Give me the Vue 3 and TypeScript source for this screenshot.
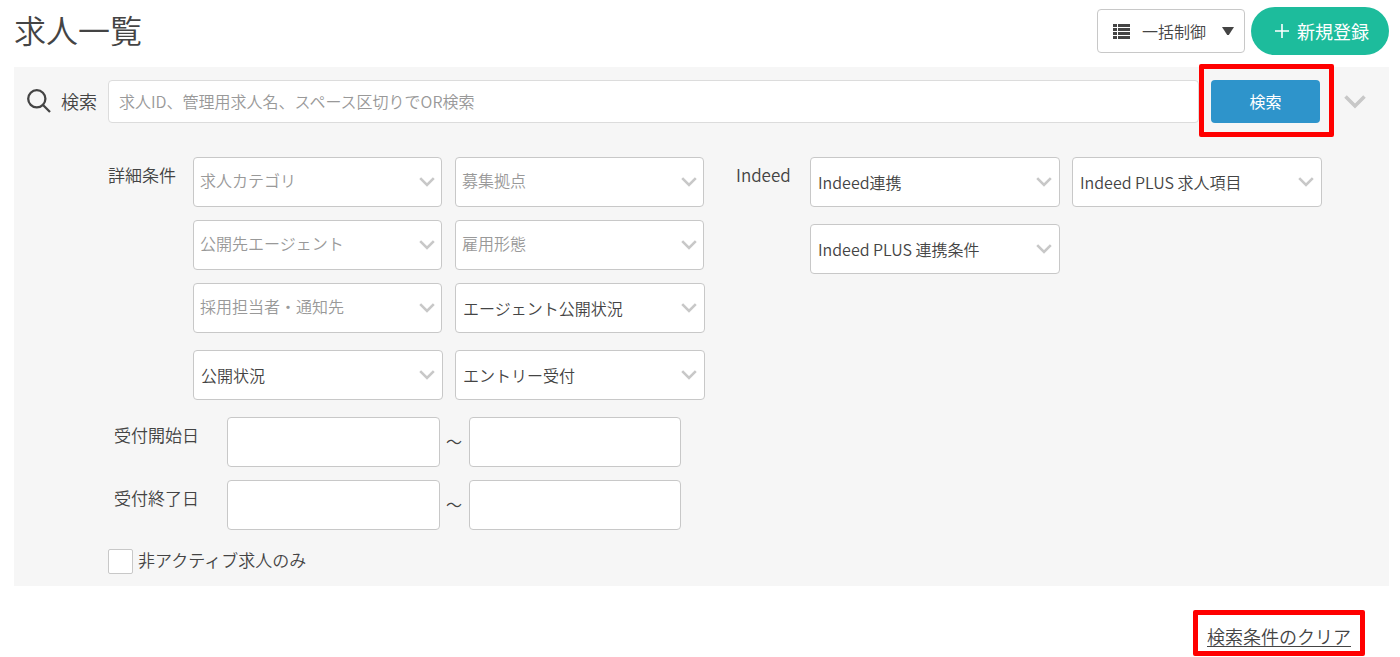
<script setup lang="ts">
import { ref } from 'vue'

interface Filter {
  id: string
  label: string
  muted?: boolean
}

interface DateRange {
  id: string
  label: string
  from: string
  to: string
}

const detailFilters: Filter[] = [
  { id: 'category', label: '求人カテゴリ', muted: true },
  { id: 'base', label: '募集拠点', muted: true },
  { id: 'agent', label: '公開先エージェント', muted: true },
  { id: 'employment', label: '雇用形態', muted: true },
  { id: 'staff', label: '採用担当者・通知先', muted: true },
  { id: 'agent-status', label: 'エージェント公開状況' },
  { id: 'status', label: '公開状況' },
  { id: 'entry', label: 'エントリー受付' },
]

const indeedFilters: Filter[] = [
  { id: 'indeed-link', label: 'Indeed連携' },
  { id: 'indeed-plus-items', label: 'Indeed PLUS 求人項目' },
  { id: 'indeed-plus-terms', label: 'Indeed PLUS 連携条件' },
]

const groups = [
  { id: 'detail', title: '詳細条件', filters: detailFilters },
  { id: 'indeed', title: 'Indeed', filters: indeedFilters },
]

const keyword = ref('')
const inactiveOnly = ref(false)
const dates = ref<DateRange[]>([
  { id: 'start', label: '受付開始日', from: '', to: '' },
  { id: 'end', label: '受付終了日', from: '', to: '' },
])

function clearAll(): void {
  keyword.value = ''
  inactiveOnly.value = false
  dates.value.forEach((d) => {
    d.from = ''
    d.to = ''
  })
}
</script>

<template>
  <main class="page">
    <header class="header">
      <h1 class="title">求人一覧</h1>
      <div class="actions">
        <button type="button" class="bulk">
          <svg class="list-icon" viewBox="0 0 17 15" aria-hidden="true">
            <path d="M0 0h4v3H0zM5 0h12v3H5zM0 4h4v3H0zM5 4h12v3H5zM0 8h4v3H0zM5 8h12v3H5zM0 12h4v3H0zM5 12h12v3H5z" />
          </svg>
          <span>一括制御</span>
          <svg class="caret" viewBox="0 0 12 8" aria-hidden="true"><path d="M0 0h12L6.800 8H5.200z" /></svg>
        </button>
        <button type="button" class="create">
          <svg class="plus" viewBox="0 0 14 14" aria-hidden="true"><path d="M7 0v14M0 7h14" /></svg>
          <span>新規登録</span>
        </button>
      </div>
    </header>

    <form class="panel" @submit.prevent>
      <div class="search-row">
        <label class="search-label" for="keyword">
          <svg class="magnifier" viewBox="0 0 24 24" aria-hidden="true">
            <circle cx="9.8" cy="9.8" r="8.6" />
            <path d="M16 16l7 7" />
          </svg>
          <span>検索</span>
        </label>
        <input id="keyword" v-model="keyword" class="keyword" type="text" placeholder="求人ID、管理用求人名、スペース区切りでOR検索" />
        <div class="submit-wrap">
          <button type="submit" class="submit">検索</button>
          <span class="highlight" aria-hidden="true"></span>
        </div>
        <button type="button" class="collapse" aria-label="詳細条件を閉じる">
          <svg viewBox="0 0 22 14" aria-hidden="true"><path d="M1.5 1.5L11 11l9.500-9.500" /></svg>
        </button>
      </div>

      <div class="conditions">
        <template v-for="group in groups" :key="group.id">
          <span :id="`${group.id}-title`" class="group-title" :class="group.id">{{ group.title }}</span>
          <div class="filters" role="group" :aria-labelledby="`${group.id}-title`">
            <div v-for="f in group.filters" :key="f.id" class="field" :class="{ muted: f.muted }">
              <select :id="f.id" class="select" :aria-label="f.label">
                <option value="">{{ f.label }}</option>
              </select>
              <svg class="chevron" viewBox="0 0 16 10" aria-hidden="true"><path d="M1.200 1.200L8 8l6.800-6.800" /></svg>
            </div>
          </div>
        </template>

        <div class="dates">
          <div v-for="d in dates" :key="d.id" class="date-row">
            <label class="date-label" :for="`${d.id}-from`">{{ d.label }}</label>
            <input :id="`${d.id}-from`" v-model="d.from" class="date" type="text" />
            <span class="tilde">～</span>
            <input :id="`${d.id}-to`" v-model="d.to" class="date" type="text" :aria-label="d.label" />
          </div>
        </div>

        <label class="inactive">
          <input v-model="inactiveOnly" class="check" type="checkbox" />
          <span>非アクティブ求人のみ</span>
        </label>
      </div>
    </form>

    <footer class="footer">
      <div class="clear-box">
        <a href="#" class="clear" @click.prevent="clearAll">検索条件のクリア</a>
      </div>
    </footer>
  </main>
</template>

<style>
body {
  background: #fff;
}
</style>

<style scoped>
.page {
  padding: 0 11px 0 14px;
  color: #444;
  font-family: 'Noto Sans CJK JP', sans-serif;
  font-size: 16px;
  font-weight: 350;
  line-height: 24px;
}

.page *,
.page *::before {
  box-sizing: border-box;
}

button,
input,
select {
  margin: 0;
  color: inherit;
  font: inherit;
}

button {
  padding: 0;
  border: 0;
  background: none;
  cursor: pointer;
}

svg {
  display: block;
  flex: none;
}

.header {
  display: flex;
  justify-content: space-between;
  height: 67px;
  padding-top: 7px;
}

.title {
  margin: 0;
  font-size: 32px;
  font-weight: 350;
  line-height: 44px;
}

.actions {
  display: flex;
  align-items: center;
  gap: 6px;
  height: 48px;
}

.bulk {
  display: flex;
  align-items: center;
  width: 148px;
  height: 44px;
  padding: 0 10px 0 15px;
  border: 1px solid #c8c8c8;
  border-radius: 4px;
  background: #fff;
}

.list-icon {
  width: 17px;
  height: 15px;
  margin-right: 12px;
  fill: #444;
}

.caret {
  width: 12px;
  height: 8px;
  margin-left: auto;
  fill: #444;
}

.create {
  display: flex;
  align-items: center;
  justify-content: center;
  gap: 8px;
  width: 138px;
  height: 48px;
  padding-left: 4px;
  border-radius: 24px;
  background: #1dbc9c;
  color: #fff;
  font-size: 18px;
  font-weight: 400;
}

.plus {
  width: 14px;
  height: 14px;
  fill: none;
  stroke: #fff;
  stroke-width: 1.6;
}

.panel {
  padding: 13px 0 12px;
  background: #f6f6f6;
}

.search-row {
  display: flex;
  align-items: center;
  padding: 0 23px 0 13px;
}

.search-label {
  display: flex;
  align-items: center;
  gap: 10px;
  width: 81px;
  padding-bottom: 1px;
  font-size: 18px;
}

.magnifier {
  width: 24px;
  height: 24px;
  fill: none;
  stroke: #444;
  stroke-width: 2.300;
}

.keyword {
  flex: 1;
  min-width: 0;
  height: 43px;
  padding: 0 10px 2px;
  border: 1px solid #dcdcdc;
  border-radius: 4px;
  background: #fff;
}

.keyword::placeholder {
  color: #999;
  opacity: 1;
}

.submit-wrap {
  position: relative;
  margin: 0 24px 0 12px;
}

.submit {
  display: block;
  width: 109px;
  height: 43px;
  padding-bottom: 2px;
  border-radius: 4px;
  background: #2e94cb;
  color: #fff;
  font-weight: 400;
}

.highlight {
  position: absolute;
  inset: -16px -14px -14px -12px;
  border: 5px solid #f00;
  border-radius: 2px;
  pointer-events: none;
}

.collapse svg {
  width: 22px;
  height: 14px;
  fill: none;
  stroke: #c8c8c8;
  stroke-width: 3.600;
}

.conditions {
  display: grid;
  grid-template-columns: 85px minmax(0, 1fr) 105px minmax(0, 1fr);
  align-items: start;
  padding: 34px 67px 0 94px;
}

.group-title,
.date-label,
.inactive {
  font-size: 17px;
}

.group-title {
  padding-top: 6px;
}

.group-title.indeed {
  padding-left: 31px;
}

.filters {
  display: grid;
  grid-template-columns: repeat(2, minmax(0, 1fr));
  column-gap: 12px;
}

.field {
  position: relative;
  margin-bottom: 17px;
}

.field.muted {
  margin: 0 1px 13px 0;
}

.select {
  display: block;
  width: 100%;
  height: 50px;
  padding: 0 34px 0 7px;
  border: 1px solid #c8c8c8;
  border-radius: 4px;
  background: #fff;
  appearance: none;
}

.muted .select {
  padding-bottom: 4px;
  padding-left: 6px;
  color: #999;
}

.chevron {
  position: absolute;
  top: 20px;
  right: 8px;
  width: 16px;
  height: 10px;
  fill: none;
  stroke: #c8c8c8;
  stroke-width: 2.600;
  pointer-events: none;
}

.muted .chevron {
  right: 7px;
}

.dates {
  grid-column: 1 / 3;
  display: grid;
  gap: 13px;
  padding: 0 24px 0 6px;
}

.date-row {
  display: flex;
}

.date-label {
  width: 113px;
  padding-top: 6px;
}

.date {
  flex: 1;
  min-width: 0;
  height: 50px;
  padding: 0 8px;
  border: 1px solid #c8c8c8;
  border-radius: 4px;
  background: #fff;
}

.tilde {
  width: 29px;
  line-height: 48px;
  text-align: center;
}

.inactive {
  grid-column: 1 / -1;
  justify-self: start;
  display: flex;
  align-items: center;
  gap: 5px;
  margin-top: 19px;
  line-height: 22px;
}

.inactive span {
  padding-bottom: 3px;
}

.check {
  width: 25px;
  height: 25px;
  border: 1px solid #c8c8c8;
  border-radius: 2px;
  background: #fff;
  appearance: none;
}

.check:checked {
  background: #2e94cb;
}

.footer {
  display: flex;
  justify-content: flex-end;
  padding: 24px 24px 0 0;
}

.clear-box {
  padding: 9px 9px 3px;
  border: 5px solid #f00;
  border-radius: 2px;
}

.clear {
  display: block;
  color: #444;
  font-size: 18px;
  text-underline-offset: 2px;
}
</style>
